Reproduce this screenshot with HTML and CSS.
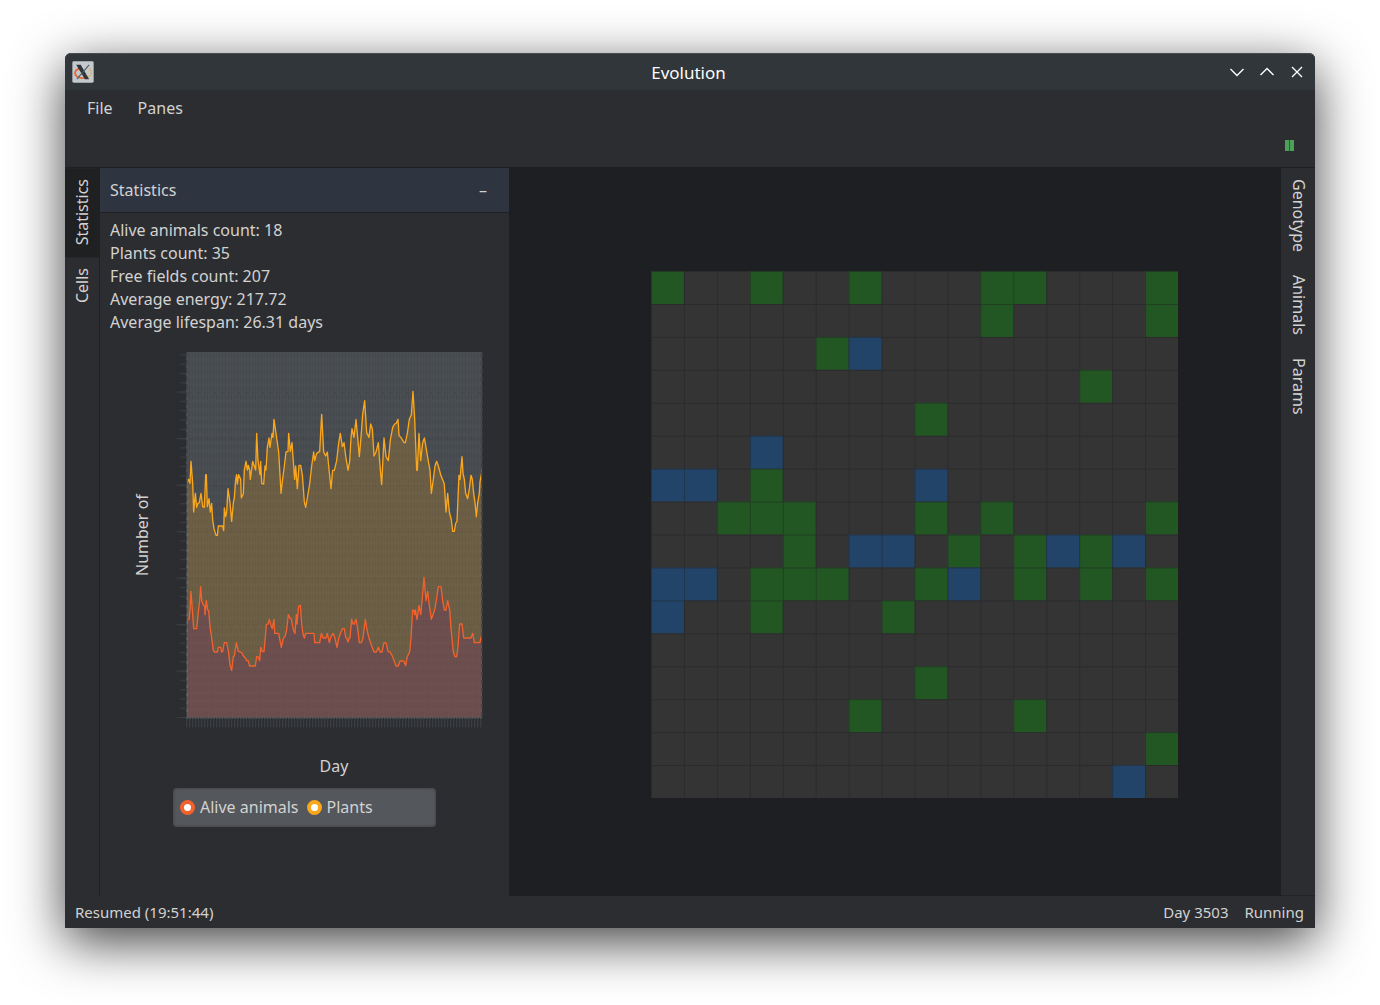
FILE: index.html
```html
<!DOCTYPE html>
<html lang="en">
<head>
<meta charset="utf-8">
<title>Evolution</title>
<link rel="stylesheet" href="styles.css">
</head>
<body>
<div class="window">
  <header class="titlebar">
    <svg class="app-icon" viewBox="0 0 63 63" aria-hidden="true">
      <rect x="1" y="1" width="61" height="61" rx="4" fill="#c3c9cc"/>
      <path d="M20 22C8 26 5 37 14 44c7 5 18 6 27 4" fill="none" stroke="#ee6530" stroke-width="5"/>
      <path d="M41 48c17-4 19-18 8-27" fill="none" stroke="#e0b06a" stroke-width="4"/>
      <path d="M12 11h13l24 41H37z" fill="#30363a"/>
      <path d="M49 11L14 52" stroke="#50575b" stroke-width="3"/>
    </svg>
    <h1 class="title">Evolution</h1>
    <div class="window-buttons">
      <button type="button" aria-label="Minimize"><svg viewBox="0 0 16 16"><path d="M1.500 5L8 11.500 14.500 5"/></svg></button>
      <button type="button" aria-label="Maximize"><svg viewBox="0 0 16 16"><path d="M1.500 11L8 4.500 14.500 11"/></svg></button>
      <button type="button" aria-label="Close"><svg viewBox="0 0 16 16"><path d="M3 3l10 10M13 3L3 13"/></svg></button>
    </div>
  </header>
  <nav class="menubar">
    <button type="button">File</button>
    <button type="button">Panes</button>
  </nav>
  <div class="toolbar">
    <button type="button" class="pause" aria-label="Pause"><svg viewBox="0 0 9 11"><path d="M0 0h9v11H0z" fill="#276136"/><path d="M0 0h4v11H0zM5 0h4v11H5z" fill="#4ba157"/></svg></button>
  </div>
  <main class="workspace">
    <nav class="rail rail-left">
      <button type="button" class="active">Statistics</button>
      <button type="button">Cells</button>
    </nav>
    <section class="panel">
      <header class="panel-header">
        <h2>Statistics</h2>
        <button type="button" aria-label="Hide pane">–</button>
      </header>
      <ul class="stats">
        <li>Alive animals count: 18</li>
        <li>Plants count: 35</li>
        <li>Free fields count: 207</li>
        <li>Average energy: 217.72</li>
        <li>Average lifespan: 26.31 days</li>
      </ul>
      <figure class="chart">
        <span class="y-label">Number of</span>
        <svg class="plot" viewBox="18 36 924 1128" role="img" aria-label="Alive animals and plants per day">
          <defs>
            <pattern id="grid" x="54" y="36" width="9" height="25" patternUnits="userSpaceOnUse">
              <path d="M4 3v15" stroke="#40444a" stroke-width="3"/>
            </pattern>
            <pattern id="major" x="54" y="1132" width="900" height="139.500" patternUnits="userSpaceOnUse">
              <path d="M0 2h900" stroke="#404448" stroke-width="3" stroke-dasharray="16 8"/>
            </pattern>
            <pattern id="days" x="48" y="1134" width="9" height="40" patternUnits="userSpaceOnUse">
              <path d="M2 0v40" stroke="#3d4145" stroke-width="3"/>
            </pattern>
            <pattern id="minor-ticks" x="30" y="1131" width="18" height="27.900" patternUnits="userSpaceOnUse">
              <path d="M0 2h18" stroke="#3b3f42" stroke-width="3"/>
            </pattern>
            <pattern id="major-ticks" x="20" y="1131" width="28" height="139.500" patternUnits="userSpaceOnUse">
              <path d="M0 2h28" stroke="#3b3f42" stroke-width="3"/>
            </pattern>
            <clipPath id="plot-area"><path d="M52 36h882v1096H52z"/></clipPath>
          </defs>
          <rect x="48" y="36" width="888" height="1098" fill="#4a4e52"/>
          <rect x="54" y="36" width="882" height="1098" fill="url(#grid)" opacity=".8"/>
          <rect x="54" y="36" width="882" height="1098" fill="url(#major)"/>
          <rect x="30" y="36" width="18" height="1098" fill="url(#minor-ticks)"/>
          <rect x="20" y="36" width="28" height="1098" fill="url(#major-ticks)"/>
          <rect x="48" y="1134" width="888" height="28" fill="url(#days)"/>
          <g clip-path="url(#plot-area)">
            <path class="plants" d="M50 430L56 418 60 430 63 364 68 430 71 516 76 460 80 502 84 490 88 488 90 476 93 460 98 500 103 502 107 404 109 404 112 500 117 476 121 516 125 490 128 540 132 566 138 586 142 586 145 558 158 558 161 572 163 504 167 530 170 516 174 446 180 488 185 544 190 488 193 474 197 418 200 404 202 432 206 404 212 418 214 474 220 462 223 390 228 364 232 390 235 376 239 390 241 418 248 364 252 376 257 390 260 280 264 362 270 404 272 364 275 430 281 432 285 378 288 390 292 322 297 294 300 322 306 280 309 292 312 238 318 280 326 336 330 404 333 460 337 424 343 378 348 336 354 334 356 280 361 334 366 308 371 378 374 418 377 378 382 446 387 376 392 376 397 404 403 486 407 502 412 474 419 432 425 378 431 336 434 362 440 340 449 334 452 280 455 223 461 336 467 348 472 336 476 378 483 446 488 391 493 391 500 362 506 309 511 280 517 320 522 308 527 348 534 391 539 364 543 294 546 266 552 292 558 238 563 292 568 350 573 292 578 223 584 182 590 278 597 292 602 252 607 266 612 348 618 336 625 308 630 378 635 434 642 294 648 350 655 362 661 300 668 262 674 252 679 250 684 238 687 286 694 294 702 308 706 308 712 280 718 238 724 224 729 154 734 238 740 391 742 391 747 280 752 362 758 308 763 294 768 322 775 364 780 391 784 460 790 418 795 378 800 364 805 378 812 404 823 432 828 516 833 460 838 516 844 540 848 574 853 574 857 550 861 544 867 406 870 418 876 350 879 400 883 418 887 460 893 476 898 446 903 406 907 418 911 460 915 488 919 530 923 488 928 460 930 426 937 385V1140H50Z"/>
            <path class="animals" d="M50 852L52 840 57 838 60 810 63 754 66 796 71 866 80 866 84 825 89 782 92 740 95 782 100 796 104 798 105 824 109 782 113 810 116 812 120 860 125 894 130 932 134 936 142 936 145 922 152 922 155 936 158 934 163 908 170 908 175 932 180 975 185 992 190 950 193 948 199 908 205 934 215 938 220 948 226 954 230 962 235 963 239 978 256 978 260 950 264 950 269 962 272 922 277 935 282 935 287 880 289 854 294 852 298 838 302 854 307 866 312 838 314 880 326 880 330 902 334 922 340 895 345 890 350 870 355 824 360 834 364 838 370 870 375 880 379 824 381 852 386 798 391 796 395 852 399 882 403 894 407 880 432 880 434 908 449 908 454 880 459 894 468 894 472 880 478 908 483 890 489 880 494 892 501 922 507 892 517 866 523 866 527 892 530 894 534 906 537 894 540 894 545 838 549 852 553 852 558 838 563 866 568 908 574 908 579 894 586 838 591 870 597 895 605 918 612 936 619 936 625 922 630 936 636 936 642 908 648 908 654 934 660 936 668 950 678 978 685 978 690 963 701 963 707 977 712 950 719 936 723 894 728 810 732 812 734 824 736 810 741 838 747 796 752 824 757 775 762 712 768 782 773 754 778 796 784 838 794 810 799 782 805 740 813 740 818 782 823 810 828 810 833 782 839 810 843 866 850 936 855 950 860 950 864 920 869 852 876 852 881 894 903 894 908 880 913 908 930 908 937 875V1140H50Z"/>
          </g>
          <path d="M50 36v1098M936 36v1098" stroke="#3c4044" stroke-width="4" stroke-dasharray="16 8"/>
          <path d="M50 1134h886" stroke="#5d6663" stroke-width="3" stroke-dasharray="5 3"/>
        </svg>
        <span class="x-label">Day</span>
      </figure>
      <ul class="legend">
        <li><i class="dot dot-animals"></i>Alive animals</li>
        <li><i class="dot dot-plants"></i>Plants</li>
      </ul>
    </section>
    <section class="world">
      <svg class="board" viewBox="0 0 16 16" role="img" aria-label="World map">
        <defs>
          <pattern id="cell" width="1" height="1" patternUnits="userSpaceOnUse"><path d="M0 0H1M0 0V1" fill="none" stroke="#1e1f22" stroke-opacity=".45" stroke-width=".06"/></pattern>
        </defs>
        <path d="M0 0h16v16H0z" fill="#343435"/>
        <path fill="#225723" d="M0 0h1v1h-1zM3 0h1v1h-1zM6 0h1v1h-1zM10 0h2v1h-2zM15 0h1v2h-1zM10 1h1v1h-1zM5 2h1v1h-1zM13 3h1v1h-1zM8 4h1v1h-1zM3 6h1v1h-1zM2 7h3v1h-3zM8 7h1v1h-1zM10 7h1v1h-1zM15 7h1v1h-1zM4 8h1v1h-1zM9 8h1v1h-1zM11 8h1v2h-1zM13 8h1v2h-1zM3 9h3v1h-3zM8 9h1v1h-1zM15 9h1v1h-1zM3 10h1v1h-1zM7 10h1v1h-1zM8 12h1v1h-1zM6 13h1v1h-1zM11 13h1v1h-1zM15 14h1v1h-1z"/>
        <path fill="#224469" d="M6 2h1v1h-1zM3 5h1v1h-1zM0 6h2v1h-2zM8 6h1v1h-1zM6 8h2v1h-2zM12 8h1v1h-1zM14 8h1v1h-1zM0 9h2v1h-2zM9 9h1v1h-1zM0 10h1v1h-1zM14 15h1v1h-1z"/>
        <path d="M0 0h16v16H0z" fill="url(#cell)"/>
      </svg>
    </section>
    <nav class="rail rail-right">
      <button type="button">Genotype</button>
      <button type="button">Animals</button>
      <button type="button">Params</button>
    </nav>
  </main>
  <footer class="statusbar">
    <span class="status-message">Resumed (19:51:44)</span>
    <span>Day 3503</span>
    <span>Running</span>
  </footer>
</div>
</body>
</html>
```
FILE: styles.css
```css
* {
  box-sizing: border-box;
}

body {
  margin: 0;
  min-height: 100vh;
  padding: 53px 65px 77px;
  display: flex;
  background: #fff;
  color: #d2d2d2;
  font: 16px/23px "Noto Sans", sans-serif;
}

button {
  margin: 0;
  padding: 0;
  border: 0;
  background: none;
  color: inherit;
  font: inherit;
}

ul {
  margin: 0;
  padding: 0;
  list-style: none;
}

.window {
  flex: 1;
  min-width: 0;
  display: flex;
  flex-direction: column;
  background: #2c2d30;
  border-radius: 6px 6px 0 0;
  box-shadow: 0 14px 52px rgba(0, 0, 0, 0.75);
}

.titlebar {
  height: 37px;
  padding: 0 10px 0 7px;
  display: grid;
  grid-template-columns: 1fr auto 1fr;
  align-items: center;
  background: #31363a;
  border-top: 1px solid #484d50;
  border-radius: 6px 6px 0 0;
  color: #fcfcfc;
}

.app-icon {
  width: 22px;
  height: 22px;
}

.title {
  margin: 0;
  font-size: 17px;
  font-weight: 400;
}

.window-buttons {
  display: flex;
  justify-content: flex-end;
  gap: 14px;
}

.window-buttons svg {
  display: block;
  width: 16px;
  height: 16px;
  fill: none;
  stroke: #fcfcfc;
  stroke-width: 1.4;
}

.menubar {
  height: 36px;
  padding: 0 22px;
  display: flex;
  align-items: center;
  gap: 25px;
}

.toolbar {
  height: 42px;
  padding: 0 21px 2px;
  display: flex;
  align-items: center;
  justify-content: flex-end;
  border-bottom: 1px solid #1f2022;
}

.pause svg {
  display: block;
  width: 9px;
  height: 11px;
}

.workspace {
  flex: 1;
  display: flex;
}

.rail {
  width: 35px;
  display: flex;
  flex-direction: column;
}

.rail button {
  padding: 12px 5px 11px;
  writing-mode: vertical-rl;
  text-align: left;
}

.rail-left {
  border-right: 1px solid #1f2022;
}

.rail-left button {
  transform: rotate(180deg);
}

.rail .active {
  background: #1f2022;
}

.rail-right {
  width: 34px;
  border-bottom: 1px solid #232427;
}

.rail-right button {
  padding: 11px 5px 12px;
}

.panel {
  width: 409px;
}

.panel-header {
  height: 45px;
  padding: 0 22px 0 10px;
  display: flex;
  align-items: center;
  justify-content: space-between;
  background: #2e3540;
  border-bottom: 1px solid #1f2022;
}

.panel-header h2 {
  margin: 0;
  font-size: 16px;
  font-weight: 400;
}

.stats {
  padding: 6px 10px;
}

.chart {
  margin: 12px 25px 0 31px;
  display: grid;
  grid-template-columns: 23px 308px;
  column-gap: 22px;
  row-gap: 27px;
}

.y-label {
  writing-mode: vertical-rl;
  transform: rotate(180deg);
  text-align: center;
  padding-top: 10px;
}

.plot {
  display: block;
  width: 308px;
  height: 376px;
}

.plants,
.animals {
  stroke-width: 4;
  stroke-linejoin: round;
}

.plants {
  fill: rgba(251, 167, 27, 0.2);
  stroke: #fba71b;
}

.animals {
  fill: rgba(108, 56, 90, 0.4);
  stroke: #f3622d;
}

.x-label {
  grid-column: 2;
  padding-left: 8px;
  text-align: center;
}

.legend {
  width: 263px;
  height: 39px;
  margin: 10px 73px;
  padding: 0 7px;
  display: flex;
  align-items: center;
  gap: 8px;
  background: #54575b;
  border-radius: 4px;
  box-shadow: inset 0 0 3px #36383b;
}

.legend li {
  display: flex;
  align-items: center;
  gap: 5px;
}

.dot {
  width: 15px;
  height: 15px;
  border: 4px solid;
  border-radius: 50%;
  background: #fff;
}

.dot-animals {
  border-color: #f3622d;
}

.dot-plants {
  border-color: #fba71b;
}

.world {
  flex: 1;
  padding: 6px 0 0 40px;
  display: grid;
  place-items: center;
  background: #1e1f22;
}

.board {
  display: block;
  width: 72%;
  aspect-ratio: 1;
}

.statusbar {
  height: 32px;
  padding: 0 11px 0 10px;
  display: flex;
  align-items: center;
  gap: 16px;
  font-size: 15px;
}

.status-message {
  flex: 1;
}
```
